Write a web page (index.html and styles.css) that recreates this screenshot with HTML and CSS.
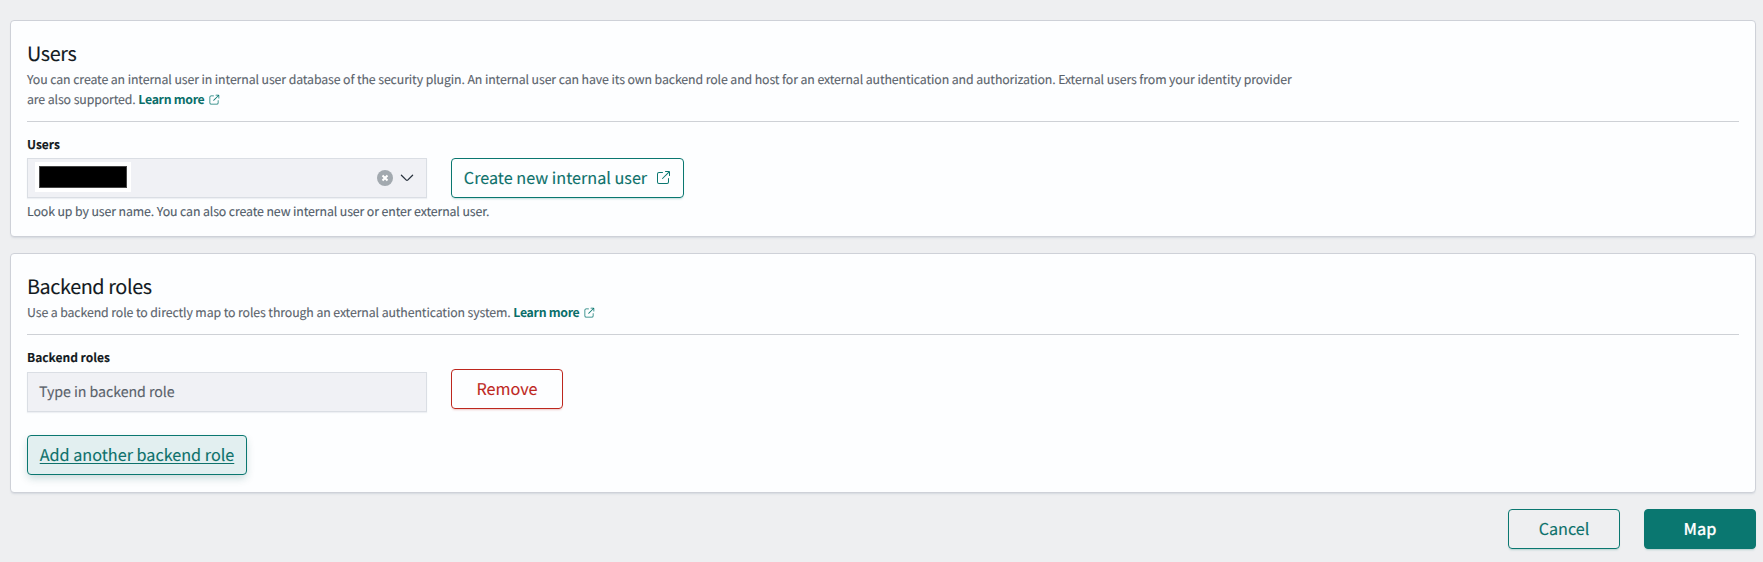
FILE: index.html
```
<!DOCTYPE html>
<html lang="en">
<head>
<meta charset="utf-8">
<title>Map user</title>
<link rel="stylesheet" href="styles.css">
</head>
<body>
<svg class="defs" width="0" height="0" aria-hidden="true">
  <symbol id="popout" viewBox="0 0 16 16">
    <path d="M13 8.5a.5.5 0 1 1 1 0V12a2 2 0 0 1-2 2H4a2 2 0 0 1-2-2V4a2 2 0 0 1 2-2h3.500a.5.5 0 0 1 0 1H4a1 1 0 0 0-1 1v8a1 1 0 0 0 1 1h8a1 1 0 0 0 1-1V8.500zm-5.120.339a.5.5 0 1 1-.706-.707L13.305 2H10.500a.5.5 0 1 1 0-1H14a1 1 0 0 1 1 1v3.500a.5.5 0 1 1-1 0V2.720L7.880 8.838z"/>
  </symbol>
</svg>
<main class="page">
  <section class="panel panel-users">
    <h2 class="title">Users</h2>
    <p class="desc">You can create an internal user in internal user database of the security plugin. An internal user can have its own backend role and host for an external authentication and authorization. External users from your identity provider<br>are also supported. <a class="link">Learn more</a><svg class="link-icon"><use href="#popout"/></svg></p>
    <hr class="rule">
    <div class="label">Users</div>
    <div class="row">
      <div class="combo">
        <span class="pill"><span class="redacted"></span></span>
        <span class="combo-icons">
          <svg width="16" height="16" viewBox="0 0 16 16"><circle cx="8" cy="8" r="8" fill="#a2a9af"/><path d="M5.500 5.500l5 5m0-5l-5 5" stroke="#fff" stroke-width="2"/></svg>
          <svg width="16" height="16" viewBox="0 0 16 16"><path d="M2.400 5.200L7.300 10.100Q8 10.700 8.700 10.100L13.600 5.200" fill="none" stroke="#27313c" stroke-width="1.250" stroke-linecap="round"/></svg>
        </span>
      </div>
      <button class="btn btn-create"><span class="create-text">Create new internal user</span><svg class="btn-icon"><use href="#popout"/></svg></button>
    </div>
    <div class="help">Look up by user name. You can also create new internal user or enter external user.</div>
  </section>
  <section class="panel panel-roles">
    <h2 class="title">Backend roles</h2>
    <p class="desc">Use a backend role to directly map to roles through an external authentication system. <a class="link">Learn more</a><svg class="link-icon"><use href="#popout"/></svg></p>
    <hr class="rule">
    <div class="row row-roles">
      <div class="field">
        <div class="label">Backend roles</div>
        <div class="input">Type in backend role</div>
      </div>
      <button class="btn btn-remove">Remove</button>
    </div>
    <button class="btn btn-add">Add another backend role</button>
  </section>
  <div class="actions">
    <button class="btn btn-cancel">Cancel</button>
    <button class="btn btn-map">Map</button>
  </div>
</main>
</body>
</html>
```
FILE: styles.css
```
* { box-sizing: border-box; }
body {
  margin: 0;
  background: #eeeff1;
  font-family: "Noto Sans CJK SC", "Open Sans", sans-serif;
  color: #131a22;
  text-rendering: geometricPrecision;
  -webkit-text-stroke: .12px;
}
.defs { position: absolute; }
.page {
  height: 562px;
  padding: 20px 7px 0 10px;
  overflow: hidden;
}
.panel {
  background: #fdfeff;
  border: 1px solid #ced1d8;
  border-radius: 4px;
  box-shadow: 0 2px 2px -1px rgba(152, 162, 179, .3);
  padding: 16px;
}
.panel-users { height: 217px; }
.panel-roles { height: 240px; margin-top: 16px; }
.title {
  margin: 0;
  font-size: 19.800px;
  line-height: 32px;
  font-weight: 400;
  letter-spacing: -.4px;
}
.desc {
  margin: 0;
  color: #5a626b;
  font-size: 12.300px;
  letter-spacing: -.096px;
  line-height: 20px;
  white-space: nowrap;
}
.link { color: #0a6e69; font-weight: 700; letter-spacing: -.3px; -webkit-text-stroke: 0; }
.link-icon {
  width: 12px;
  height: 12px;
  margin-left: 4px;
  vertical-align: -2px;
  fill: #0a7770;
}
.rule {
  border: 0;
  height: 1px;
  margin: 12px 0 13px;
  background: #ced1d6;
}
.label {
  font-size: 12px;
  line-height: 20px;
  font-weight: 700;
}
.row { display: flex; gap: 24px; margin-top: 3px; }
.row-roles { margin-top: 0; }
.field { display: grid; gap: 4px; }
.combo, .input {
  display: flex;
  align-items: center;
  width: 400px;
  height: 40px;
  background: #f0f1f5;
  border: 1px solid #dadee4;
  box-shadow: 0 1px 1px rgba(152, 162, 179, .15);
}
.combo { justify-content: space-between; padding: 0 11px 0 7px; }
.pill { background: #fff; padding: 4px; margin-top: -2px; }
.redacted { display: block; width: 88px; height: 22px; background: #000; border: 1px solid #444; }
.combo-icons { display: flex; gap: 6px; }
.input { padding: 0 11px; font-size: 14.200px; letter-spacing: -.05px; line-height: 20px; color: #5a626b; }
.help { margin-top: 3px; font-size: 12.300px; letter-spacing: -.096px; line-height: 20px; color: #505b68; }
.btn {
  display: flex;
  align-items: center;
  justify-content: center;
  height: 40px;
  width: 112px;
  padding: 0 0 2px;
  border: 1px solid #0a7770;
  border-radius: 4px;
  background: transparent;
  color: #0d716b;
  font: 400 16.200px "Noto Sans CJK SC", "Open Sans", sans-serif;
  text-rendering: geometricPrecision;
  box-shadow: 0 2px 2px -1px rgba(10, 119, 112, .25);
}
.btn-create { width: 233px; gap: 8px; }
.btn-icon { width: 16px; height: 16px; margin-top: 2px; fill: #0a7770; }
.btn-remove { margin-top: 21px; color: #bd271e; border-color: #bd271e; box-shadow: 0 2px 2px -1px rgba(189, 39, 30, .25); }
.btn-add {
  width: 220px;
  margin-top: 23px;
  background: #e2eff0;
  text-decoration: underline;
  text-decoration-thickness: 1px;
  text-underline-offset: 2px;
  box-shadow: 0 4px 8px -1px rgba(10, 80, 80, .22);
}
.actions { display: flex; justify-content: flex-end; gap: 24px; margin-top: 16px; }
.btn-map { background: #0a7770; color: #fff; font-weight: 500; }
```
